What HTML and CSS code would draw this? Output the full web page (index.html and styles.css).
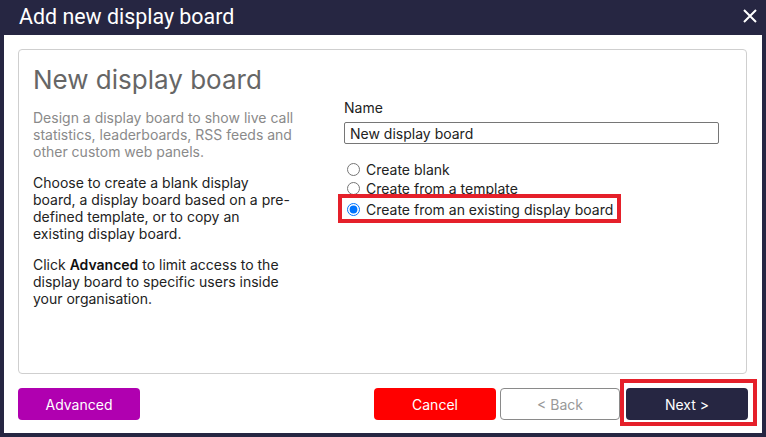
FILE: index.html
```html
<!DOCTYPE html>
<html>
<head>
<meta charset="utf-8">
<link rel="stylesheet" href="styles.css">
</head>
<body>
<div class="dialog">
  <div class="titlebar">
    <span class="title">Add new display board</span>
    <svg class="close" width="14" height="14" viewBox="0 0 14 14"><path d="M1 1 L13 13 M13 1 L1 13" stroke="#fff" stroke-width="2" fill="none"/></svg>
  </div>
  <div class="body">
    <div class="panel">
      <div class="left">
        <h1 class="heading">New display board</h1>
        <p class="intro">Design a display board to show live call statistics, leaderboards, RSS feeds and other custom web panels.</p>
        <p class="text">Choose to create a blank display board, a display board based on a pre-defined template, or to copy an existing display board.</p>
        <p class="text">Click <b>Advanced</b> to limit access to the display board to specific users inside your organisation.</p>
      </div>
      <div class="right">
        <label class="label">Name</label>
        <input class="input" type="text" value="New display board">
        <div class="radios">
          <label class="radio"><input type="radio" name="mode"> Create blank</label>
          <label class="radio"><input type="radio" name="mode"> Create from a template</label>
          <label class="radio selected"><input type="radio" name="mode" checked> Create from an existing display board<span class="mark mark-radio"></span></label>
        </div>
      </div>
    </div>
    <div class="footer">
      <button class="btn advanced">Advanced</button>
      <div class="spacer"></div>
      <button class="btn cancel">Cancel</button>
      <button class="btn back">&lt; Back</button>
      <button class="btn next">Next &gt;<span class="mark mark-next"></span></button>
    </div>
  </div>
</div>
</body>
</html>
```

FILE: styles.css
```css
html, body {
  margin: 0;
  padding: 0;
  background: #262642;
  width: 766px;
  height: 437px;
  overflow: hidden;
}
.dialog {
  display: flex;
  flex-direction: column;
  height: 437px;
}
.titlebar {
  height: 35px;
  display: flex;
  align-items: center;
  justify-content: space-between;
  padding: 0 9px 0 19px;
}
.title {
  font-family: Roboto, "Liberation Sans", sans-serif;
  font-size: 21.4px;
  color: #fff;
  margin-top: -2px;
}
.close {
  margin-top: -3px;
}
.body {
  background: #fff;
  margin: 0 4px 4px 4px;
  flex: 1;
  padding: 14px 14px 13px 14px;
  display: flex;
  flex-direction: column;
  font-family: Inter, "Noto Sans", sans-serif;
}
.panel {
  flex: 1;
  border: 1px solid #cfcfcf;
  border-radius: 4px;
  display: flex;
  padding: 0 27px 0 14px;
  margin: 0 1px 14px 0;
}
.left {
  width: 260px;
}
.heading {
  font-weight: 400;
  font-size: 26px;
  color: #666;
  margin: 15px 0 14px 0;
  line-height: 30px;
}
.intro, .text {
  font-size: 14px;
  line-height: 17px;
  margin: 0 0 14px 0;
}
.intro { color: #8a8a8a; margin-right: -6px; }
.text { color: #222; }
.text b { font-weight: 600; color: #111; }
.right {
  margin-left: auto;
  width: 375px;
  padding-top: 49px;
  display: flex;
  flex-direction: column;
}
.label {
  font-size: 14px;
  color: #222;
  line-height: 17px;
  margin-bottom: 6px;
}
.input {
  box-sizing: border-box;
  width: 375px;
  height: 22px;
  border: 1px solid #767676;
  border-radius: 2px;
  font-family: Inter, "Noto Sans", sans-serif;
  font-size: 14px;
  color: #222;
  padding: 0 5px;
  margin: 0;
}
.radios {
  display: flex;
  flex-direction: column;
  margin-top: 16px;
}
.radio {
  font-size: 14px;
  color: #222;
  line-height: 19px;
  display: flex;
  align-items: center;
  position: relative;
  align-self: flex-start;
}
.radio input {
  margin: 0 6px 0 3px;
  width: 13px;
  height: 13px;
}
.radio.selected { margin-top: 2px; }
.mark {
  position: absolute;
  border: 4px solid #e5202a;
  pointer-events: none;
}
.mark-radio {
  left: -6px;
  right: -8px;
  top: -6px;
  bottom: -4px;
}
.footer {
  display: flex;
  height: 32px;
}
.spacer { flex: 1; }
.btn {
  width: 122px;
  height: 32px;
  border: none;
  border-radius: 4px;
  font-family: Inter, "Noto Sans", sans-serif;
  font-size: 14px;
  color: #fff;
  position: relative;
  padding: 0;
}
.advanced { background: #b000b0; }
.cancel { background: #ff0000; margin-right: 4px; }
.back {
  background: #fff;
  border: 1px solid #8a8a8a;
  color: #999;
  width: 120px;
  margin-right: 6px;
}
.next { background: #262642; }
.mark-next {
  left: -6px;
  right: -9px;
  top: -9px;
  bottom: -6px;
}
```
